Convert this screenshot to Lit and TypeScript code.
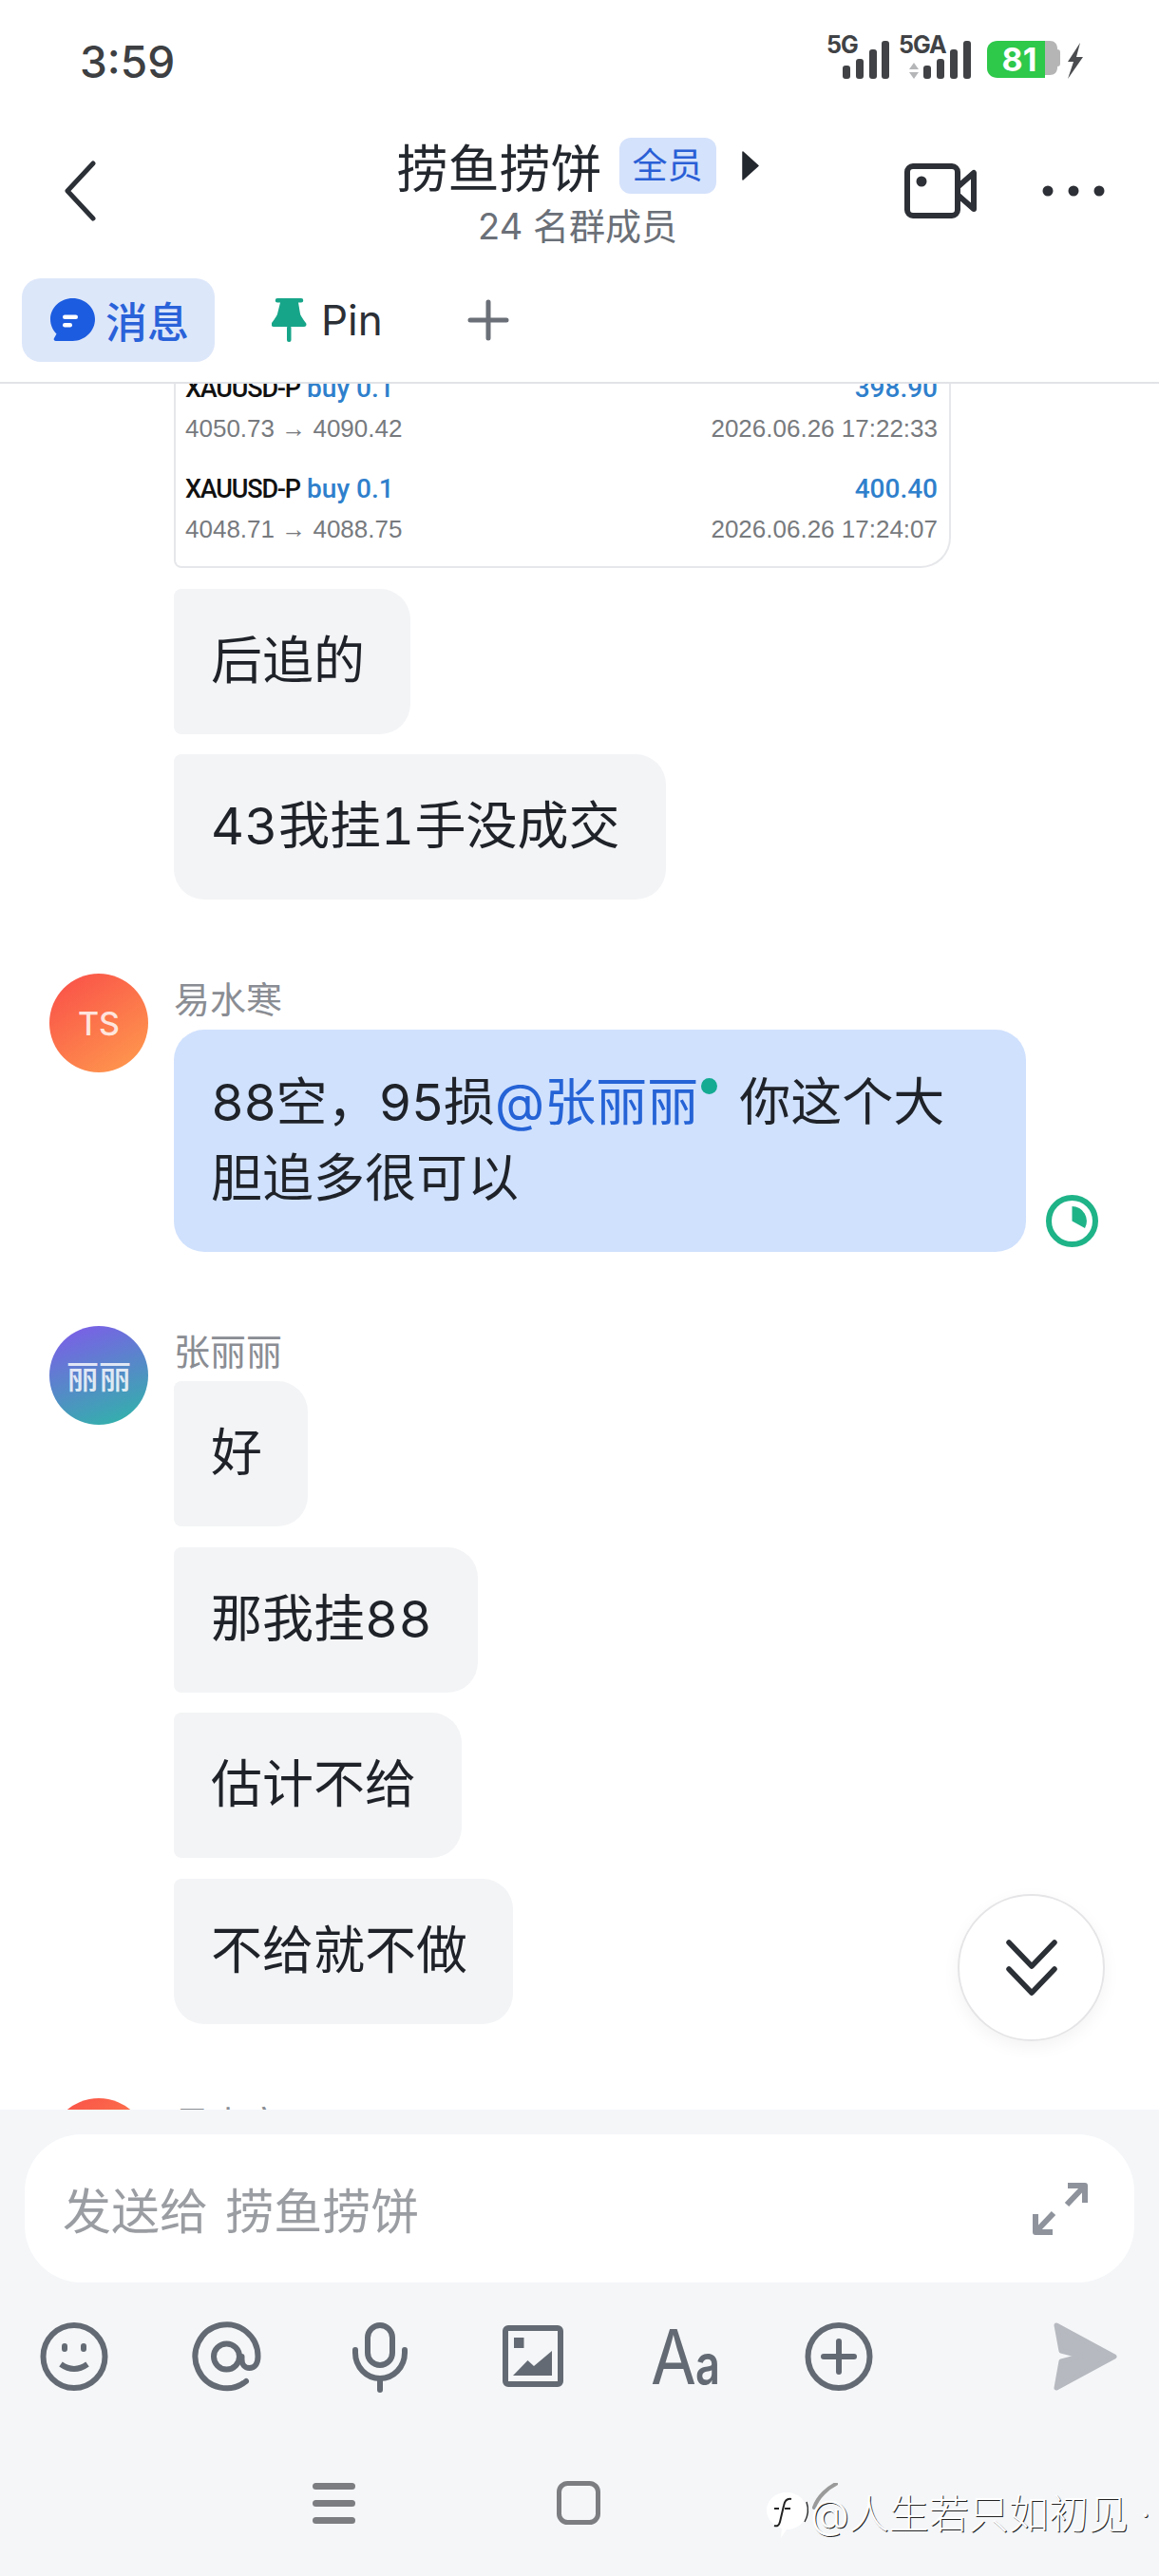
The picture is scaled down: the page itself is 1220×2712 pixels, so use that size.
import { LitElement, css, html, svg } from "lit"
import { customElement } from "lit/decorators.js"

const ink = "#646a73"

const icons = {
  back: html`<svg width="33" height="64" viewBox="0 0 33 64"><path d="M30 3 3 32l27 29" fill="none" stroke="#2b2f36" stroke-width="5" stroke-linecap="round" stroke-linejoin="round"/></svg>`,
  play: html`<svg width="18" height="31" viewBox="0 0 18 31"><path d="M1 1 17 15.500 1 30z" fill="#23272e" stroke="#23272e" stroke-width="1.500" stroke-linejoin="round"/></svg>`,
  video: html`<svg width="77" height="58" viewBox="0 0 77 58" fill="none" stroke="#2d3036" stroke-width="6"><rect x="3" y="3" width="53" height="52" rx="6"/><circle cx="18" cy="19" r="5.500" fill="#2d3036" stroke="none"/><path d="M57 24 73 10v38L57 34" stroke-linejoin="round"/></svg>`,
  dots: html`<svg width="66" height="12" viewBox="0 0 66 12" fill="#2d3036"><circle cx="6" cy="6" r="5.500"/><circle cx="33" cy="6" r="5.500"/><circle cx="60" cy="6" r="5.500"/></svg>`,
  chat: html`<svg width="47" height="46" viewBox="0 0 47 46"><path d="M23.500 0C36.500 0 47 9.800 47 22S36.500 45 23.500 45H6C4 45 3 43.500 4 42L6.500 37.500C2.500 33.500 0 28 0 22 0 9.800 10.500 0 23.500 0Z" fill="#1c5ce0"/><rect x="13" y="17.500" width="16" height="4.500" rx="2.200" fill="#fff"/><rect x="13" y="26" width="10" height="4.500" rx="2.200" fill="#fff"/></svg>`,
  pin: html`<svg width="37" height="46" viewBox="0 0 37 46" fill="#17a589"><path d="M6 0h25a2.200 2.200 0 0 1 0 4.500h-3l2 12c.5 2 4 7 6 9.500 1 1.500.5 4-2 4H2c-2.500 0-3-2.500-2-4 2-2.500 5.500-7.500 6-9.500l3-12H6A2.200 2.200 0 0 1 6 0z"/><rect x="16" y="29" width="4.500" height="17" rx="2"/></svg>`,
  plus: html`<svg width="44" height="44" viewBox="0 0 44 44" stroke="#6b7078" stroke-width="5" stroke-linecap="round"><path d="M22 3v38M3 22h38"/></svg>`,
  clock: html`<svg width="55" height="55" viewBox="0 0 55 55"><circle cx="27.500" cy="27.500" r="24.500" fill="none" stroke="#1fb388" stroke-width="6"/><path d="M27.500 12A15.500 15.500 0 0 1 41 35L27.500 27.500z" fill="#1fb388"/></svg>`,
  down: html`<svg width="54" height="59" viewBox="0 0 54 59" fill="none" stroke="#2b2f36" stroke-width="5.500" stroke-linecap="round" stroke-linejoin="round"><path d="M3 3l24 25L51 3M3 31l24 25 24-25"/></svg>`,
  expand: html`<svg width="60" height="58" viewBox="0 0 60 58" fill="none" stroke="#8e939c" stroke-width="6" stroke-linejoin="round"><path d="M38 5h18v18M56 5 37 25M4 35v19h18M4 54l19-20"/></svg>`,
  hamburger: html`<svg width="45" height="43" viewBox="0 0 45 43" fill="#7b7d80"><rect width="45" height="7" rx="3.500"/><rect y="18" width="45" height="7" rx="3.500"/><rect y="36" width="45" height="7" rx="3.500"/></svg>`,
  square: html`<svg width="46" height="46" viewBox="0 0 46 46"><rect x="2.500" y="2.500" width="41" height="41" rx="9" fill="none" stroke="#7b7d80" stroke-width="5"/></svg>`,
}

const tool = (body: unknown) => html`<svg width="80" height="80" viewBox="0 0 80 80" fill="none" stroke=${ink} stroke-width="6" stroke-linecap="round">${body}</svg>`

const tools = [
  tool(svg`<ellipse cx="40" cy="40" rx="32.500" ry="33"/><path d="M30 29v3M50 29v3"/><path d="M26 48q14 10 28 0" stroke-linecap="butt"/>`),
  tool(svg`<path d="M60 66A33 33.500 0 1 1 72.500 40c0 8-4 12-9 12s-8-4-8-9v-3"/><circle cx="39.500" cy="40" r="13.500"/>`),
  tool(svg`<rect x="27" y="7" width="26" height="42" rx="13"/><path d="M14 33v3a26 27 0 0 0 52 0v-3M40 63v12"/>`),
  tool(svg`<rect x="11" y="10" width="58" height="59" rx="3"/><path d="M20 20h10.500v11H20zM19 60l15.500-16 6.500 6 19-16v26z" fill=${ink} stroke="none"/>`),
  tool(svg`<text class="aa-big" x="3" y="69" textLength="48" lengthAdjust="spacingAndGlyphs" fill=${ink} stroke="none">A</text><text class="aa-small" x="50" y="69" textLength="26" lengthAdjust="spacingAndGlyphs" fill=${ink} stroke="none">a</text>`),
  tool(svg`<ellipse cx="40" cy="40" rx="32.500" ry="33"/><path d="M40 24v32M24 40h32"/>`),
]

const send = html`<svg width="80" height="80" viewBox="0 0 80 80"><path d="M10 7 15 34l21 5.500L15 45l-5 28 61-33z" fill="#b6b9bf" stroke="#b6b9bf" stroke-width="5" stroke-linejoin="round"/></svg>`

@customElement("app-root")
export class AppRoot extends LitElement {
  // digits in the app's font are all one width
  digits(text: string) {
    return text.split(/(\d+)/).map((part, i) => (i % 2 ? html`<span class="num">${part}</span>` : part))
  }

  bubbles(items: string[]) {
    return items.map((t, i) => html`<div class="bubble ${i === items.length - 1 ? "last" : ""}">${this.digits(t)}</div>`)
  }

  trade(price: string, amount: string, time: string) {
    return html`
      <div class="trade">
        <div class="line"><span><b>XAUUSD-P</b> <i>buy 0.1</i></span><i>${amount}</i></div>
        <div class="line sub"><span>${price}</span><span>${time}</span></div>
      </div>
    `
  }

  render() {
    return html`
      <div class="status">
        <span class="time">3:59</span>
        <svg class="signal" width="270" height="64" viewBox="0 -18 270 64">
          <g fill="#404245">
            <text class="net" x="0" y="18">5G</text>
            <rect x="17" y="31" width="8" height="14" rx="3"/><rect x="31" y="24" width="8" height="21" rx="3"/><rect x="45" y="14" width="8" height="31" rx="3"/><rect x="58" y="5" width="8" height="40" rx="3"/>
            <text class="net" x="76" y="18">5GA</text>
            <rect x="102" y="31" width="8" height="14" rx="3"/><rect x="116" y="24" width="8" height="21" rx="3"/><rect x="130" y="14" width="8" height="31" rx="3"/><rect x="144" y="5" width="8" height="40" rx="3"/>
          </g>
          <path d="M92 28l-5 7h10zM92 45l-5-7h10z" fill="#b4b6b8"/>
          <path d="M230 5h5c5 0 8 3 8 8v1c2 0 3 1 3 3v12c0 2-1 3-3 3v1c0 5-3 8-8 8h-5z" fill="#b5b5b5"/>
          <path d="M180 5h50v39h-50c-6 0-11-4-11-10V15c0-6 5-10 11-10z" fill="#2ec84a"/>
          <text class="level" x="203" y="37" text-anchor="middle">81</text>
          <path d="M267 7 254 27h6l-6 18 16-23h-7l4-15z" fill="#4a4c4f"/>
        </svg>
      </div>

      <header class="header">
        <div class="side">${icons.back}</div>
        <div class="center">
          <div class="title">
            <span>捞鱼捞饼</span>
            <span class="chip">全员</span>
            ${icons.play}
          </div>
          <div class="members">24 名群成员</div>
        </div>
        <div class="side end">${icons.video}${icons.dots}</div>
      </header>

      <nav class="tabs">
        <div class="tab active">${icons.chat}<span>消息</span></div>
        <div class="tab pin">${icons.pin}<span>Pin</span></div>
        ${icons.plus}
      </nav>

      <main class="chat">
        <section class="group first">
          <div class="avatar none"></div>
          <div class="body">
            <div class="card">
              ${this.trade("4050.73 → 4090.42", "398.90", "2026.06.26 17:22:33")}
              ${this.trade("4048.71 → 4088.75", "400.40", "2026.06.26 17:24:07")}
            </div>
            ${this.bubbles(["后追的", "43我挂1手没成交"])}
          </div>
        </section>

        <section class="group">
          <div class="avatar ts">TS</div>
          <div class="body">
            <div class="name">易水寒</div>
            <div class="sent">
              <div class="bubble mine">${this.digits("88空，95损")}<span class="mention">@张丽丽</span><span class="dot"></span>你这个大<br />胆追多很可以</div>
              ${icons.clock}
            </div>
          </div>
        </section>

        <section class="group">
          <div class="avatar li">丽丽</div>
          <div class="body">
            <div class="name">张丽丽</div>
            ${this.bubbles(["好", "那我挂88", "估计不给", "不给就不做"])}
          </div>
        </section>

        <section class="group">
          <div class="avatar ts">TS</div>
          <div class="body"><div class="name">易水寒</div></div>
        </section>
      </main>

      <footer class="composer">
        <div class="input"><span>发送给 捞鱼捞饼</span>${icons.expand}</div>
        <div class="tools">${tools}<span class="send">${send}</span></div>
        <div class="nav">${icons.hamburger}${icons.square}</div>
      </footer>

      <button class="jump">${icons.down}</button>

      <div class="mark">
        <svg width="76" height="60" viewBox="0 0 76 60">
          <path d="M22 10c12 0 21 8 21 19 0 12-9 20-21 20l-6 9 1-10C8 45 1 38 1 29 1 18 10 10 22 10z" fill="#fff"/>
          <path d="M27 17c-5-1-7 2-8 7l-4 17c-1 4-3 5-6 4M9 27h5M20 27h6" fill="none" stroke="#222" stroke-width="2"/>
          <path d="M43 20c2 6 2 14-2 21" fill="none" stroke="#333" stroke-width="1.500"/>
          <path d="M74 1 C66 5 55 14 51 26" fill="none" stroke="#9a9a9a" stroke-width="4" stroke-linecap="round"/>
        </svg>
        <span>@人生若只如初见 ·</span>
      </div>
    `
  }

  static styles = css`
    :host {
      display: flex;
      flex-direction: column;
      position: relative;
      width: 1220px;
      height: 2712px;
      overflow: hidden;
      background: #fff;
      color: #1f2329;
      font-family: Inter, "Noto Sans CJK SC", sans-serif;
    }
    svg {
      display: block;
      flex: none;
    }
    .status {
      display: flex;
      justify-content: space-between;
      align-items: center;
      flex: none;
      height: 129px;
      padding: 0 80px 0 84px;
    }
    .time {
      font-size: 46px;
      font-weight: 500;
      color: #3d3f42;
    }
    .signal {
      align-self: flex-start;
      margin-top: 20px;
    }
    .net {
      font-size: 25px;
      font-weight: 700;
      letter-spacing: -1px;
    }
    .level {
      font-size: 34px;
      font-weight: 700;
      fill: #fff;
    }
    .header {
      display: grid;
      grid-template-columns: 1fr auto 1fr;
      flex: none;
      height: 144px;
    }
    .side {
      display: flex;
      align-items: center;
      padding-left: 68px;
    }
    .side.end {
      justify-content: flex-end;
      gap: 68px;
      padding: 0 57px 0 0;
    }
    .center {
      display: flex;
      flex-direction: column;
      align-items: center;
      padding: 16px 4px 0 0;
    }
    .title {
      display: flex;
      align-items: center;
      height: 59px;
      font-size: 54px;
      color: #23272e;
    }
    .chip {
      margin: 0 27px 0 18px;
      padding: 0 14px;
      border-radius: 12px;
      background: #d5e2fb;
      color: #2a5fd6;
      font-size: 37px;
      line-height: 59px;
    }
    .members {
      margin-top: 9px;
      font-size: 38px;
      line-height: 50px;
      color: #6b7078;
    }
    .tabs {
      display: flex;
      align-items: center;
      flex: none;
      height: 88px;
      padding: 20px 0 21px 23px;
      border-bottom: 2px solid #e1e3e7;
    }
    .tab {
      display: flex;
      align-items: center;
      font-size: 44px;
      color: #2b2f36;
    }
    .tab.active {
      gap: 11px;
      height: 88px;
      padding: 0 27px 0 30px;
      border-radius: 20px;
      background: #dde7fa;
      color: #2a62d9;
      font-weight: 500;
    }
    .tab.pin {
      gap: 15px;
      margin: 0 89px 0 60px;
    }
    .chat {
      flex: 1;
      min-height: 0;
      overflow: hidden;
      padding-left: 52px;
    }
    .group {
      display: flex;
      gap: 27px;
      margin-top: 78px;
    }
    .group.first {
      margin-top: -14px;
    }
    .avatar {
      display: flex;
      justify-content: center;
      align-items: center;
      flex: none;
      width: 104px;
      height: 104px;
      border-radius: 50%;
      color: rgba(255, 255, 255, 0.82);
      font-size: 34px;
      font-weight: 500;
    }
    .avatar.none {
      height: 0;
    }
    .avatar.ts {
      background: linear-gradient(145deg, #f94c48, #ff9e4e);
    }
    .avatar.li {
      background: linear-gradient(160deg, #8158ec, #2cb8a6);
    }
    .body {
      display: flex;
      flex-direction: column;
      align-items: flex-start;
      gap: 21.5px;
    }
    .name {
      height: 54px;
      margin-bottom: -17px;
      font-size: 38px;
      line-height: 54px;
      color: #8a8d93;
    }
    .bubble {
      padding: 36px 48px 37px 39px;
      border-radius: 8px 32px 32px 8px;
      background: #f3f4f6;
      font-size: 54px;
      line-height: 80px;
    }
    .bubble.last {
      border-bottom-left-radius: 32px;
    }
    .num {
      letter-spacing: 0.5px;
      font-variant-numeric: tabular-nums;
    }
    .bubble.mine {
      width: 897px;
      box-sizing: border-box;
      padding: 37px 0 37px 39px;
      border-radius: 32px;
      background: #d0e1fd;
    }
    .mine .num {
      letter-spacing: -0.75px;
    }
    .sent {
      display: flex;
      align-items: flex-end;
      gap: 21px;
    }
    .sent svg {
      margin-bottom: 5px;
    }
    .mention {
      color: #2563d6;
    }
    .dot {
      display: inline-block;
      width: 17px;
      height: 17px;
      margin: 0 23px 0 3px;
      border-radius: 50%;
      background: #14ab92;
      transform: translateY(-28px);
    }
    .card {
      box-sizing: border-box;
      width: 818px;
      padding: 0 12px 16px 10px;
      border: 2px solid #e6e7ea;
      border-top: 0;
      border-radius: 0 0 32px 8px;
      font-family: "Liberation Sans", "Noto Sans CJK SC", sans-serif;
      font-size: 26px;
    }
    .trade + .trade {
      margin-top: 22px;
    }
    .line {
      display: flex;
      justify-content: space-between;
      height: 38px;
      line-height: 38px;
    }
    .line.sub {
      height: 46px;
      line-height: 46px;
      color: #777a7e;
    }
    .line i {
      font-family: Roboto, sans-serif;
      font-style: normal;
      font-weight: 500;
      font-size: 28px;
      color: #2f80cc;
    }
    .line b {
      font-family: Roboto, sans-serif;
      font-weight: 500;
      font-size: 27px;
      letter-spacing: -1.2px;
      color: #111;
    }
    .composer {
      flex: none;
      height: 491px;
      box-sizing: border-box;
      padding-top: 26px;
      background: #f4f6f8;
    }
    .input {
      display: flex;
      justify-content: space-between;
      align-items: center;
      height: 156px;
      margin: 0 26px;
      padding: 0 48px 0 40px;
      border-radius: 60px;
      background: #fff;
      color: #9a9da2;
      font-size: 51px;
      word-spacing: 4px;
    }
    .tools {
      display: flex;
      gap: 81px;
      margin-top: 38px;
      padding: 0 38px;
    }
    .send {
      margin-left: auto;
    }
    .aa-big {
      font-size: 80px;
      font-weight: 400;
    }
    .aa-small {
      font-size: 58px;
      font-weight: 600;
    }
    .nav {
      display: flex;
      align-items: center;
      gap: 212px;
      margin-top: 91px;
      padding-left: 329px;
    }
    .jump {
      position: absolute;
      left: 1008px;
      top: 1994px;
      display: flex;
      justify-content: center;
      align-items: center;
      width: 155px;
      height: 155px;
      padding: 0;
      border: 2px solid #e5e5e7;
      border-radius: 50%;
      background: #fff;
      box-shadow: 0 6px 18px rgba(0, 0, 0, 0.05);
    }
    .mark {
      position: absolute;
      left: 806px;
      top: 2613px;
      display: flex;
      align-items: center;
      white-space: nowrap;
      color: #fff;
      font-size: 42px;
      font-weight: 300;
      text-shadow: 1px 1px 0 #222;
    }
    .mark span {
      margin-left: -29px;
    }
  `
}
